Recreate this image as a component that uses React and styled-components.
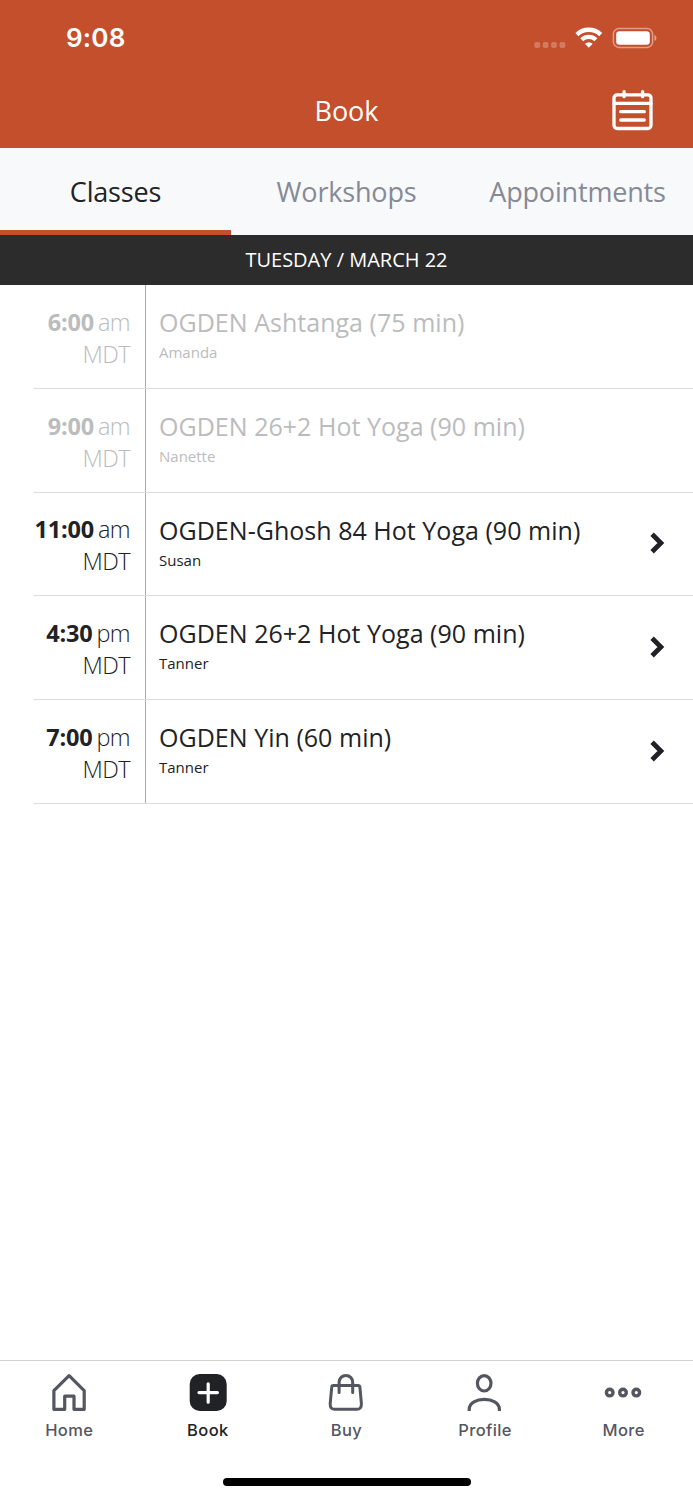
import { useState } from 'react'

import styled, { createGlobalStyle } from 'styled-components';

const GlobalStyle = createGlobalStyle`
  * {
    box-sizing: border-box;
  }

  body {
    margin: 0;
    background-color: #fff;
    font-family: 'Open Sans', sans-serif;
    color: #212226;
  }

  button {
    padding: 0;
    border: none;
    background: none;
    color: inherit;
    font-family: inherit;
    cursor: pointer;
  }

  svg {
    display: block;
  }
`

const Screen = styled.div`
  width: 100%;
  height: 1500px;
  display: flex;
  flex-direction: column;
`

const Header = styled.header`
  height: 148px;
  background-color: #c44f2c;
  color: #fff;
`

const StatusBar = styled.div`
  height: 76px;
  display: flex;
  align-items: center;
  justify-content: space-between;
  padding: 0 36px 0 66px;
`

const Clock = styled.span`
  padding-bottom: 1px;
  font-family: Inter, sans-serif;
  font-size: 26px;
  font-weight: 600;
  letter-spacing: 0.2px;
`

const StatusIcons = styled.span`
  display: flex;
  align-items: center;
`

const TitleBar = styled.div`
  height: 72px;
  display: grid;
  grid-template-columns: 1fr auto 1fr;
  align-items: center;
  padding: 0 40px;
`

const PageTitle = styled.h1`
  grid-column: 2;
  margin: 0;
  padding-bottom: 4px;
  font-size: 27px;
  font-weight: 400;
`

const CalendarButton = styled.button`
  justify-self: end;
  padding-bottom: 3px;
`

const Tabs = styled.nav`
  height: 86.5px;
  display: grid;
  grid-template-columns: repeat(3, 1fr);
  background-color: #f8f9fb;
`

const Tab = styled.button`
  padding-top: 5px;
  border-bottom: solid 5px ${({ $selected }) => ($selected ? '#c44f2c' : 'transparent')};
  color: ${({ $selected }) => ($selected ? '#212226' : '#868a95')};
  font-size: 27px;
  letter-spacing: -0.18px;
`

const DateHeading = styled.h2`
  height: 50.5px;
  display: flex;
  align-items: center;
  justify-content: center;
  margin: 0;
  background-color: #2c2c2c;
  color: #fff;
  font-size: 20px;
  font-weight: 400;
`

const ClassList = styled.ul`
  flex: 1;
  margin: 0;
  padding: 0 0 0 34px;
  list-style: none;
`

const ClassRow = styled.li`
  height: 103.75px;
  display: flex;
  border-bottom: solid 1px #dcdcdc;
  color: ${({ $past }) => ($past ? '#bbbcbd' : '#212226')};
`

const ClassTime = styled.div`
  width: 112px;
  flex-shrink: 0;
  padding: 20.75px 15px 0 0;
  border-right: solid 1px #a9a9a9;
  font-size: 23.5px;
  font-weight: 300;
  letter-spacing: -0.6px;
  line-height: 32px;
  text-align: right;
  white-space: nowrap;

  strong {
    margin-right: 4px;
    font-weight: 700;
    letter-spacing: -0.2px;
  }
`

const ClassInfo = styled.div`
  flex: 1;
  padding: 19px 0 0 13px;
`

const ClassName = styled.h3`
  margin: 0;
  font-size: 25px;
  font-weight: 400;
  letter-spacing: 0.03px;
  line-height: 36px;
`

const Teacher = styled.p`
  margin: 0;
  font-size: 15px;
  line-height: 24px;
`

const RowArrow = styled.span`
  display: flex;
  align-items: center;
  padding: 0 28px 1px 0;
`

const BottomNav = styled.nav`
  height: 140px;
  border-top: solid 1px #d0d0d2;
`

const NavItems = styled.div`
  height: 112px;
  display: grid;
  grid-template-columns: repeat(5, 1fr);
`

const NavItem = styled.button`
  display: flex;
  flex-direction: column;
  align-items: center;
  padding-top: 11px;
  color: ${({ $active }) => ($active ? '#212226' : '#545660')};
  font-family: Inter, sans-serif;
  font-size: 16.5px;
  font-weight: ${({ $active }) => ($active ? 500 : 450)};
  letter-spacing: 0.4px;
  line-height: 20px;

  svg {
    margin-bottom: 8px;
  }
`

const HomeIndicator = styled.div`
  width: 248px;
  height: 8px;
  margin: 5px auto 0;
  border-radius: 4px;
  background-color: #000;
`

const SignalIcon = () => (
  <svg width="32" height="30" viewBox="0 0 32 30" fill="#fff" fillOpacity="0.25">
    <rect x="0.3" y="19" width="5.8" height="6" rx="2" />
    <rect x="8.7" y="19" width="5.8" height="6" rx="2" />
    <rect x="17.1" y="19" width="5.8" height="6" rx="2" />
    <rect x="25.5" y="19" width="5.8" height="6" rx="2" />
  </svg>
)

const WifiIcon = () => (
  <svg width="46" height="30" viewBox="0 0 46 30" fill="none" stroke="#fff">
    <path d="M10.9 11.6a17.2 17.2 0 0 1 23.8 0" strokeWidth="4.4" />
    <path d="M15.7 16.8a10.3 10.3 0 0 1 14.2 0" strokeWidth="4.2" />
    <path d="M22.8 24.8l-3.9-4a5.6 5.6 0 0 1 7.8 0z" fill="#fff" stroke="none" />
  </svg>
)

const BatteryIcon = () => (
  <svg width="45" height="30" viewBox="0 0 45 30" fill="none">
    <rect x="1.4" y="5.6" width="39.2" height="18.8" rx="5.5" stroke="#fff" strokeOpacity="0.45" strokeWidth="1.5" />
    <rect x="4.2" y="8.2" width="33.6" height="13.6" rx="3.3" fill="#fff" />
    <path d="M42.5 11.9c2.6 1.2 2.6 5.1 0 6.2z" fill="#fff" fillOpacity="0.5" />
  </svg>
)

const CalendarIcon = () => (
  <svg width="41" height="41" viewBox="0 0 41 41" fill="none" stroke="#fff" strokeWidth="3.3" strokeLinecap="round">
    <rect x="2" y="4.8" width="37" height="33.7" rx="3.2" />
    <path d="M2 13.4h37" />
    <path d="M12.1 1.7v5M30.6 1.7v5" />
    <path d="M8.7 21.7h23.6M8.7 30h23.6" />
  </svg>
)

const ArrowIcon = () => (
  <svg width="15" height="22" viewBox="0 0 15 22" fill="none" stroke="#212226" strokeWidth="4.8">
    <path d="M2.1 2.2L10.9 11L2.1 19.8" />
  </svg>
)

const HomeIcon = () => (
  <svg width="40" height="40" viewBox="0 0 40 40" fill="none" stroke="currentColor" strokeWidth="3.2" strokeLinejoin="round">
    <path d="M4.9 18.6L20.1 3.6L35.2 18.6V37.3H25V24.2H15.7V37.3H4.9z" />
  </svg>
)

const BookIcon = () => (
  <svg width="40" height="40" viewBox="0 0 40 40" fill="none">
    <rect x="1.7" y="2" width="37" height="37" rx="10" fill="currentColor" />
    <path d="M20.2 11.8v18.4M11 20.6h18.4" stroke="#fff" strokeWidth="3.2" strokeLinecap="round" />
  </svg>
)

const BuyIcon = () => (
  <svg width="40" height="40" viewBox="0 0 40 40" fill="none" stroke="currentColor" strokeWidth="3" strokeLinecap="round">
    <path d="M7.6 13.6H32.1Q33.7 13.6 33.9 15.2L35.4 31.5Q35.6 37.3 30.8 37.3H8.8Q3.9 37.3 4.2 31.5L5.7 15.2Q5.8 13.6 7.6 13.6z" />
    <path d="M13.1 20.5V10.2a6.8 6.8 0 0 1 13.6 0V20.5" />
  </svg>
)

const ProfileIcon = () => (
  <svg width="40" height="40" viewBox="0 0 40 40" fill="none" stroke="currentColor" strokeWidth="3.2">
    <ellipse cx="19.2" cy="11.3" rx="6.8" ry="7.7" />
    <path d="M4.2 39v-1.6C4.2 24 34.4 24 34.4 37.4V39" />
  </svg>
)

const MoreIcon = () => (
  <svg width="40" height="40" viewBox="0 0 40 40" fill="none" stroke="currentColor" strokeWidth="3.4">
    <circle cx="5.7" cy="20.6" r="3.3" />
    <circle cx="19" cy="20.6" r="3.3" />
    <circle cx="32.3" cy="20.6" r="3.3" />
  </svg>
)

const tabs = ['Classes', 'Workshops', 'Appointments']

const classes = [
  { time: '6:00', period: 'am', name: 'OGDEN Ashtanga (75 min)', teacher: 'Amanda', past: true },
  { time: '9:00', period: 'am', name: 'OGDEN 26+2 Hot Yoga (90 min)', teacher: 'Nanette', past: true },
  { time: '11:00', period: 'am', name: 'OGDEN-Ghosh 84 Hot Yoga (90 min)', teacher: 'Susan', past: false },
  { time: '4:30', period: 'pm', name: 'OGDEN 26+2 Hot Yoga (90 min)', teacher: 'Tanner', past: false },
  { time: '7:00', period: 'pm', name: 'OGDEN Yin (60 min)', teacher: 'Tanner', past: false },
]

const navItems = [
  { label: 'Home', Icon: HomeIcon },
  { label: 'Book', Icon: BookIcon },
  { label: 'Buy', Icon: BuyIcon },
  { label: 'Profile', Icon: ProfileIcon },
  { label: 'More', Icon: MoreIcon },
]

const App = () => {
  const [selectedTab, setSelectedTab] = useState('Classes')

  return (
    <Screen>
      <GlobalStyle />
      <Header>
        <StatusBar>
          <Clock>9:08</Clock>
          <StatusIcons>
            <SignalIcon />
            <WifiIcon />
            <BatteryIcon />
          </StatusIcons>
        </StatusBar>
        <TitleBar>
          <PageTitle>Book</PageTitle>
          <CalendarButton>
            <CalendarIcon />
          </CalendarButton>
        </TitleBar>
      </Header>
      <Tabs>
        {tabs.map(tab => (
          <Tab key={tab} $selected={tab === selectedTab} onClick={() => setSelectedTab(tab)}>
            {tab}
          </Tab>
        ))}
      </Tabs>
      <DateHeading>TUESDAY / MARCH 22</DateHeading>
      <ClassList>
        {classes.map(({ time, period, name, teacher, past }) => (
          <ClassRow key={time} $past={past}>
            <ClassTime>
              <strong>{time}</strong>{period}
              <br />
              MDT
            </ClassTime>
            <ClassInfo>
              <ClassName>{name}</ClassName>
              <Teacher>{teacher}</Teacher>
            </ClassInfo>
            {!past &&
              <RowArrow>
                <ArrowIcon />
              </RowArrow>
            }
          </ClassRow>
        ))}
      </ClassList>
      <BottomNav>
        <NavItems>
          {navItems.map(({ label, Icon }) => (
            <NavItem key={label} $active={label === 'Book'}>
              <Icon />
              {label}
            </NavItem>
          ))}
        </NavItems>
        <HomeIndicator />
      </BottomNav>
    </Screen>
  )
}

export default App
